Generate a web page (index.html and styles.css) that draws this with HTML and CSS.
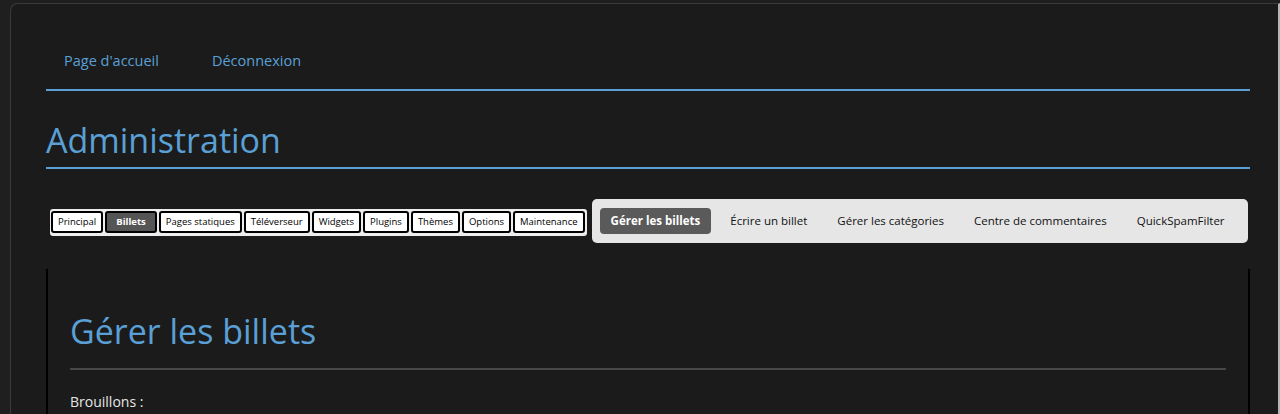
FILE: index.html
```html
<!DOCTYPE html>
<html lang="fr">
<head>
<meta charset="utf-8">
<title>Administration</title>
<link rel="stylesheet" href="styles.css">
</head>
<body>
<div class="window">
  <nav class="topnav">
    <a href="#">Page d'accueil</a>
    <a href="#">Déconnexion</a>
  </nav>
  <h1 class="title">Administration</h1>
  <div class="menus">
    <ul class="tabs">
      <li><a href="#">Principal</a></li>
      <li class="active"><a href="#">Billets</a></li>
      <li><a href="#">Pages statiques</a></li>
      <li><a href="#">Téléverseur</a></li>
      <li><a href="#">Widgets</a></li>
      <li><a href="#">Plugins</a></li>
      <li><a href="#">Thèmes</a></li>
      <li><a href="#">Options</a></li>
      <li><a href="#">Maintenance</a></li>
    </ul>
    <ul class="subnav">
      <li class="active"><a href="#">Gérer les billets</a></li>
      <li><a href="#">Écrire un billet</a></li>
      <li><a href="#">Gérer les catégories</a></li>
      <li><a href="#">Centre de commentaires</a></li>
      <li><a href="#">QuickSpamFilter</a></li>
    </ul>
  </div>
  <main class="content">
    <h2 class="page-title">Gérer les billets</h2>
    <p class="label">Brouillons :</p>
  </main>
</div>
</body>
</html>
```
FILE: styles.css
```css
html, body {
  margin: 0;
  padding: 0;
  background: #1f1f1f;
  height: 100%;
  overflow: hidden;
}
body {
  font-family: "Open Sans", "Noto Sans", sans-serif;
  color: #e0e0e0;
}
a { text-decoration: none; }
ul { list-style: none; margin: 0; padding: 0; }

.window {
  margin: 3px 0 0 10px;
  border-top: 1px solid #3a3a3a;
  border-left: 1px solid #3a3a3a;
  border-right: 2px solid #b5b5b5;
  border-top-left-radius: 8px;
  background: #1b1b1b;
  padding: 0 28px 0 35px;
  height: 420px;
}

.topnav {
  display: flex;
  gap: 53px;
  padding: 47px 0 0 18px;
  height: 38px;
  border-bottom: 2px solid #5aa0d6;
}
.topnav a {
  color: #5aa0d6;
  font-size: 14.5px;
  line-height: 20px;
}

.title {
  margin: 0;
  padding: 25px 0 0 0;
  height: 51px;
  font-size: 34px;
  font-weight: 400;
  color: #5aa0d6;
  line-height: 48px;
  border-bottom: 2px solid #5aa0d6;
}

.menus {
  display: flex;
  align-items: center;
  gap: 5px;
  padding: 30px 4px 0 4px;
}

.tabs {
  display: flex;
  gap: 2px;
  background: #ededed;
  padding: 2px 2px 3px 1px;
  margin-top: 3px;
  border-radius: 3px;
  white-space: nowrap;
}
.tabs li a {
  display: block;
  border: 2px solid #000;
  border-radius: 3px;
  background: #fff;
  color: #000;
  font-size: 9.5px;
  padding: 2px 5px;
  line-height: 14px;
}
.tabs li.active a {
  background: #555;
  color: #fff;
  font-weight: 700;
  padding: 2px 9px;
}

.subnav {
  flex: 1;
  display: flex;
  align-items: center;
  background: #e6e6e6;
  border-radius: 5px;
  padding: 9px 8px;
  white-space: nowrap;
}
.subnav li a {
  display: block;
  color: #111;
  font-size: 11.5px;
  padding: 4px 15px;
  line-height: 18px;
  border-radius: 4px;
}
.subnav li.active a {
  background: #5a5a5a;
  color: #fff;
  font-weight: 700;
  padding: 4px 11px;
  margin-right: 4px;
}

.content {
  margin-top: 26px;
  border-left: 2px solid #000;
  border-right: 2px solid #000;
  padding: 0 22px;
  height: 200px;
}
.page-title {
  margin: 0;
  padding-top: 38px;
  font-size: 34px;
  font-weight: 400;
  color: #5aa0d6;
  line-height: 48px;
  padding-bottom: 13px;
  border-bottom: 2px solid #474747;
}
.label {
  margin: 22px 0 0 0;
  font-size: 14px;
  line-height: 20px;
  color: #e6e6e6;
}
```
